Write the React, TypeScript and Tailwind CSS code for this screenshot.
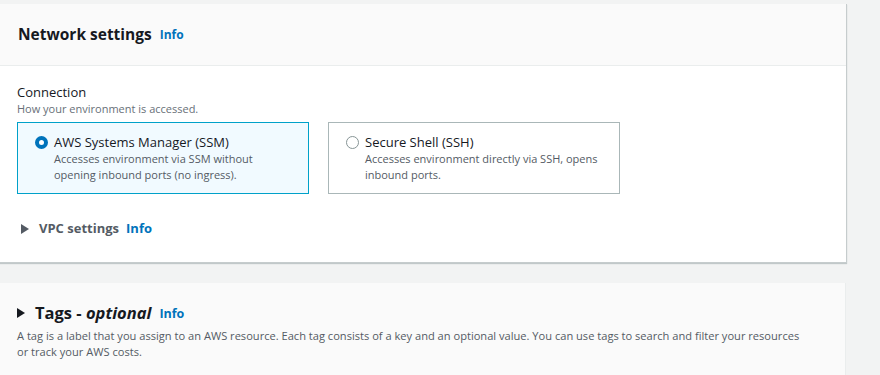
import React from 'react';

const Info: React.FC<{ className?: string }> = ({ className = '' }) => (
  <span className={`font-bold text-[#0073bb] ${className}`}>Info</span>
);

const Caret: React.FC<{ className?: string }> = ({ className = '' }) => (
  <svg viewBox="0 0 8 10" className={className} fill="currentColor">
    <path d="M0 0L8 5L0 10Z" />
  </svg>
);

const options = [
  {
    title: 'AWS Systems Manager (SSM)',
    desc: ['Accesses environment via SSM without', 'opening inbound ports (no ingress).'],
    selected: true,
  },
  {
    title: 'Secure Shell (SSH)',
    desc: ['Accesses environment directly via SSH, opens', 'inbound ports.'],
    selected: false,
  },
];

export default function App() {
  return (
    <div
      className="w-[880px] h-[375px] overflow-hidden bg-[#f2f3f3] pt-[4px] text-[#16191f]"
      style={{ fontFamily: "'Open Sans', 'Noto Sans', sans-serif" }}
    >
      {/* Network settings */}
      <div className="w-[847px] bg-white border-r border-b border-[#c6cccd] shadow-[0_1px_1px_rgba(0,28,36,0.2)]">
        <div className="h-[62px] bg-[#fafafa] border-b border-[#eaeded] flex items-center pl-[18px]">
          <h2 className="text-[15.5px] font-bold leading-none">Network settings</h2>
          <Info className="ml-[8px] text-[12px] mt-[1px]" />
        </div>
        <div className="pl-[17px] pt-[17px] pb-[23px]">
          <div className="text-[13px] leading-[18px]">Connection</div>
          <div className="text-[11px] leading-[16px] text-[#687078]">How your environment is accessed.</div>
          <div className="flex gap-[19px] mt-[5px]">
            {options.map((o) => (
              <div
                key={o.title}
                className={`w-[292px] h-[72px] border pl-[17px] pt-[10px] flex gap-[6px] ${
                  o.selected ? 'bg-[#f1faff] border-[#00a1c9]' : 'bg-white border-[#aab7b8]'
                }`}
              >
                <span
                  className={`mt-[3px] w-[13px] h-[13px] rounded-full shrink-0 ${
                    o.selected ? 'border-[4px] border-[#0073bb] bg-white' : 'border border-[#879596] bg-white'
                  }`}
                />
                <div>
                  <div className="text-[13px] leading-[18px]">{o.title}</div>
                  {o.desc.map((d) => (
                    <div key={d} className="text-[11px] leading-[16px] text-[#545b64]">
                      {d}
                    </div>
                  ))}
                </div>
              </div>
            ))}
          </div>
          <div className="flex items-center mt-[25px] pl-[4px] text-[#545b64]">
            <Caret className="w-[8px] h-[10px] text-[#545b64]" />
            <span className="ml-[10px] text-[13px] font-bold">VPC settings</span>
            <Info className="ml-[7px] text-[13px]" />
          </div>
        </div>
      </div>

      {/* Tags */}
      <div className="w-[846px] mt-[20px] bg-[#fafafa] border-r border-[#eaeded] pl-[17px] pt-[21px] pb-[20px]">
        <div className="flex items-center">
          <Caret className="w-[8px] h-[10px] text-[#16191f]" />
          <h2 className="ml-[10px] text-[16.5px] font-bold leading-none">
            Tags - <i>optional</i>
          </h2>
          <Info className="ml-[8px] text-[12.5px] mt-[1px]" />
        </div>
        <p className="mt-[5px] text-[11.1px] leading-[16px] text-[#545b64] max-w-[788px]">
          A tag is a label that you assign to an AWS resource. Each tag consists of a key and an optional value. You can use tags to search and filter your resources
          or track your AWS costs.
        </p>
      </div>
    </div>
  );
}
